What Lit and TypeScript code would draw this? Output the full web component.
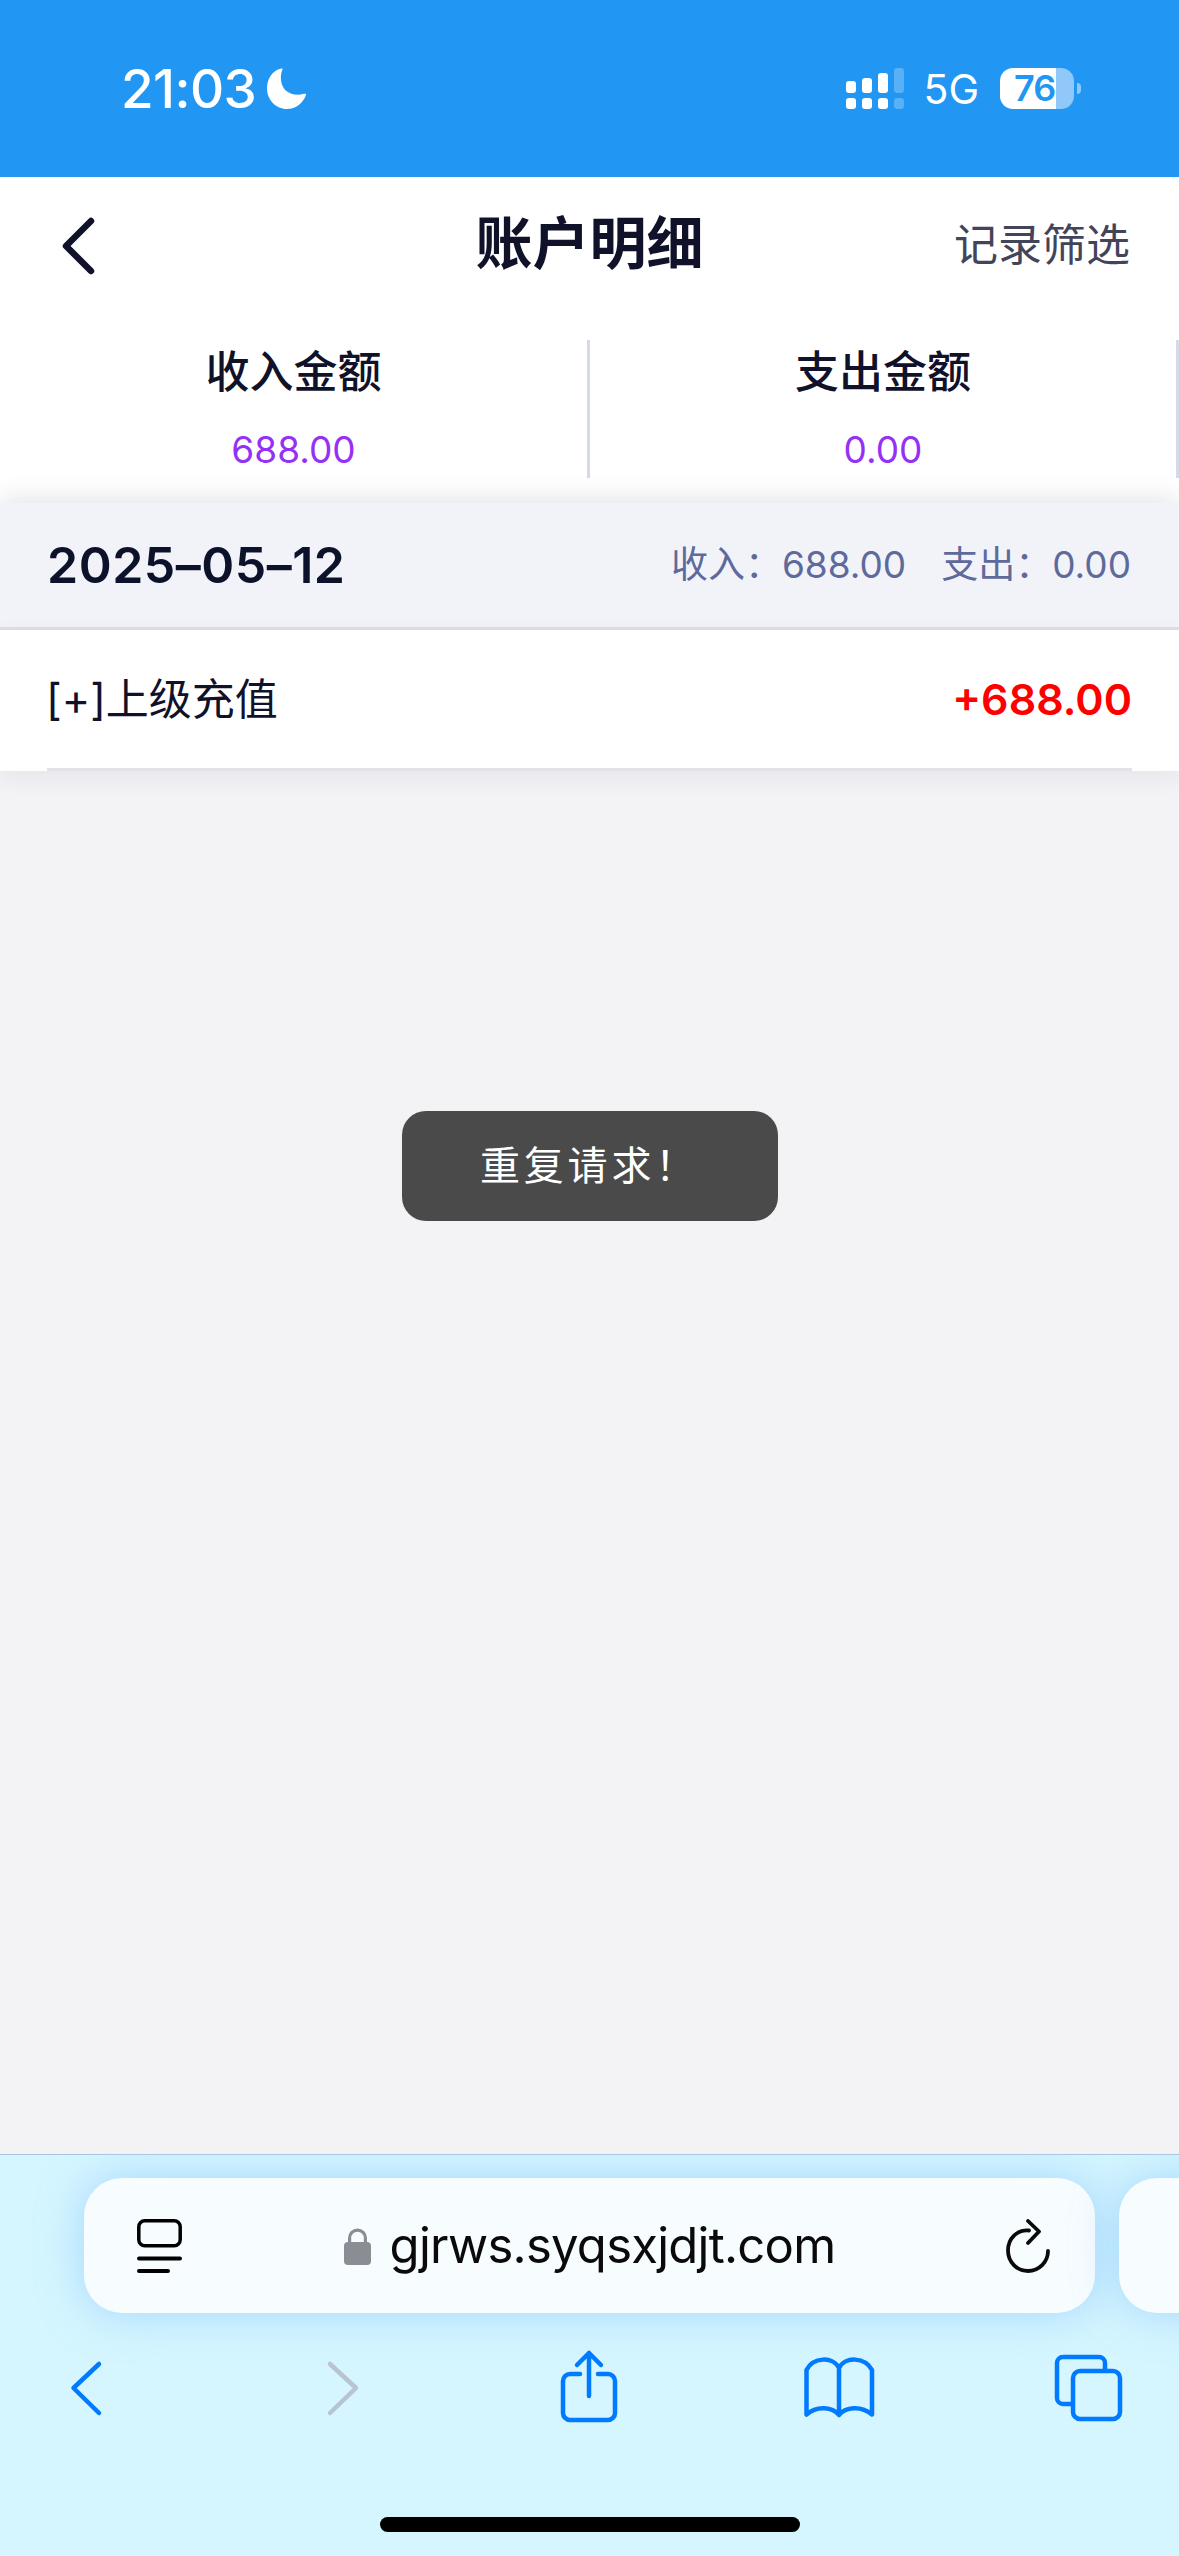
import { LitElement, html, css } from "lit";
import { customElement } from "lit/decorators.js";

@customElement("app-root")
export class AppRoot extends LitElement {
  static styles = css`
    :host { display: block; width: 1179px; height: 2556px; overflow: hidden; font-family: Inter, "Noto Sans CJK SC", sans-serif; color: #0f1229; background: #f3f3f6; }
    .shell { display: flex; flex-direction: column; height: 2556px; }
    .status { flex: 0 0 177px; background: #2196f3; color: #fff; display: flex; align-items: center; justify-content: space-between; padding: 0 98px 0 121px; box-sizing: border-box; }
    .st-left { display: flex; align-items: center; gap: 11px; }
    .time { font-size: 53px; font-weight: 500; line-height: 60px; letter-spacing: -0.6px; }
    .st-right { display: flex; align-items: center; }
    .net { font-size: 41px; line-height: 48px; margin: 0 21px 0 19px; }
    .battery { width: 74px; height: 41px; border-radius: 13px; background: linear-gradient(90deg, #fff 56px, #90c8fa 56px); color: #2196f3; font-size: 36px; font-weight: 600; line-height: 41px; padding-left: 14px; box-sizing: border-box; letter-spacing: -1px; }
    .nub { width: 4px; height: 11px; margin-left: 3px; background: #90c8fa; border-radius: 0 6px 6px 0; }

    .page { flex: 1; position: relative; display: flex; flex-direction: column; min-height: 0; }
    .nav { height: 132px; background: #fff; display: grid; grid-template-columns: 1fr auto 1fr; align-items: center; padding: 0 49px; }
    .back { display: block; margin: 6px 0 0 12px; }
    .title { font-size: 57px; font-weight: 700; line-height: 70px; margin-top: 2px; }
    .filter { justify-self: end; font-size: 44px; color: #42445a; line-height: 60px; margin-top: 4px; }
    .summary { background: #fff; display: flex; padding: 31px 0 25px; }
    .cell { flex: 0 0 590px; height: 138px; box-sizing: border-box; border-right: 3px solid #d5daea; display: flex; flex-direction: column; align-items: center; }
    .cell + .cell { flex-basis: 589px; }
    .cell-label { font-size: 44px; font-weight: 500; line-height: 64px; }
    .cell-value { margin-top: 18px; font-size: 37px; line-height: 56px; color: #9431f5; }
    .day { position: relative; height: 127px; box-sizing: border-box; background: #f2f3f9; border-bottom: 3px solid #e0e0e3; display: flex; align-items: center; justify-content: space-between; padding: 0 48px 0 47px; box-shadow: 0 -4px 24px rgba(40, 45, 90, 0.13); }
    .date { font-size: 50px; font-weight: 600; color: #0b1229; line-height: 60px; letter-spacing: 0.5px; }
    .day-totals { display: flex; gap: 35px; font-size: 37px; color: #5d6a9b; line-height: 50px; }
    .row { position: relative; background: #fff; padding: 0 47px; box-shadow: 0 6px 22px rgba(40, 45, 90, 0.07); }
    .row-inner { height: 141px; box-sizing: border-box; border-bottom: 3px solid #e3e3e6; display: flex; align-items: center; justify-content: space-between; }
    .row-name { font-size: 43px; line-height: 60px; margin-left: -1px; }
    .row-amount { font-size: 43px; font-weight: 600; color: #f00; line-height: 60px; }
    .toast { position: absolute; top: 934px; left: 402px; width: 376px; height: 110px; box-sizing: border-box; background: #4a4a4a; border-radius: 24px; color: #fff; font-size: 40px; font-weight: 400; letter-spacing: 3.8px; display: flex; align-items: center; padding: 0 0 6px 78px; white-space: nowrap; }

    .bar { flex: 0 0 402px; box-sizing: border-box; background: #d5f6ff; border-top: 1px solid #a9c6e0; overflow: hidden; display: flex; flex-direction: column; }
    .urls { display: flex; gap: 24px; margin-top: 23px; padding-left: 84px; }
    .url { flex: 0 0 1011px; height: 135px; box-sizing: border-box; background: #f7fcff; border-radius: 38px; box-shadow: 0 0 44px rgba(120, 185, 250, 0.5); display: grid; grid-template-columns: 1fr auto 1fr; align-items: center; padding: 0 45px; }
    .tab-ic { margin-left: 8px; display: block; }
    .addr { display: flex; align-items: center; gap: 19px; font-size: 49px; color: #0a0a0a; line-height: 60px; letter-spacing: -0.75px; }
    .rel { justify-self: end; display: block; }
    .tools { display: flex; gap: 170px; padding-left: 46px; margin-top: 33px; }
    .tools svg { display: block; flex: none; }
    .forward { margin-left: 1px; }
    .home { align-self: center; width: 420px; height: 15px; border-radius: 8px; background: #000; margin-top: 91px; }
  `;

  render() {
    return html`<div class="shell">
      <div class="status">
        <div class="st-left">
          <span class="time">21:03</span>
          <svg width="40" height="41" viewBox="0 0 40 41"><path fill="#fff" d="M14.5 .5C6 2 0 10 0 20.5 0 32 9 41 20 41c9 0 16-6 19-14 .3-1-.8-1.5-2-1.2C26 29 15 24 14 12c-.3-4 0-7 1.500-10.500.3-.7 0-1.100-1-1z"/></svg>
        </div>
        <div class="st-right">
          <svg width="58" height="41" viewBox="0 0 58 41" fill="#fff">
            <rect x="0" y="30" width="10" height="11" rx="3"/><rect x="16" y="30" width="10" height="11" rx="3"/><rect x="32" y="30" width="10" height="11" rx="3"/>
            <rect x="48" y="30" width="10" height="11" rx="3" opacity=".25"/>
            <rect x="0" y="13" width="10" height="12" rx="3"/><rect x="16" y="10" width="10" height="15" rx="3"/><rect x="32" y="5" width="10" height="20" rx="3"/>
            <rect x="48" y="0" width="10" height="25" rx="3" opacity=".25"/>
          </svg>
          <span class="net">5G</span>
          <div class="battery">76</div>
          <div class="nub"></div>
        </div>
      </div>

      <div class="page">
        <div class="nav">
          <svg class="back" width="36" height="60" viewBox="0 0 36 60"><path d="M30 5 5 30l25 25" fill="none" stroke="#0f1229" stroke-width="6.500" stroke-linecap="round" stroke-linejoin="round"/></svg>
          <div class="title">账户明细</div>
          <div class="filter">记录筛选</div>
        </div>
        <div class="summary">
          <div class="cell"><div class="cell-label">收入金额</div><div class="cell-value">688.00</div></div>
          <div class="cell"><div class="cell-label">支出金额</div><div class="cell-value">0.00</div></div>
        </div>
        <div class="day">
          <div class="date">2025–05–12</div>
          <div class="day-totals"><span>收入：688.00</span><span>支出：0.00</span></div>
        </div>
        <div class="row">
          <div class="row-inner"><span class="row-name">[+]上级充值</span><span class="row-amount">+688.00</span></div>
        </div>
        <div class="toast">重复请求！</div>
      </div>

      <div class="bar">
        <div class="urls">
          <div class="url">
            <svg class="tab-ic" width="45" height="54" viewBox="0 0 45 54" fill="none" stroke="#000" stroke-width="3.500" stroke-linecap="round"><rect x="1.800" y="1.800" width="41.400" height="25" rx="6"/><path d="M2 39.500h41M2 52h29" stroke-width="4"/></svg>
            <div class="addr">
              <svg width="27" height="38" viewBox="0 0 27 38" fill="#8a8d94"><path d="M4 17V11a9.500 9.500 0 0 1 19 0v6h-3.200V11a6.300 6.300 0 0 0-12.600 0v6z"/><rect x="0" y="15" width="27" height="23" rx="4"/></svg>
              <span>gjrws.syqsxjdjt.com</span>
            </div>
            <svg class="rel" width="44" height="54" viewBox="0 0 44 54" fill="none" stroke="#0a0a0a" stroke-width="3.800" stroke-linecap="round" stroke-linejoin="round"><path d="M23 11.500C11 10.500 2 19.500 2 31.500c0 11.500 9 20.500 20 20.500s20-9 20-20"/><path d="M22 2l11 10.500L22 24"/></svg>
          </div>
          <div class="url"></div>
        </div>
        <div class="tools">
          <svg width="80" height="80" viewBox="0 0 80 80" fill="none" stroke="#007aff" stroke-width="4.500" stroke-linecap="round" stroke-linejoin="round"><path d="M53 18 27.500 42 53 67" /></svg>
          <svg class="forward" width="80" height="80" viewBox="0 0 80 80" fill="none" stroke="#b8c4cf" stroke-width="4.500" stroke-linecap="round" stroke-linejoin="round"><path d="M33 18l26 24-26 25"/></svg>
          <svg width="80" height="80" viewBox="0 0 80 80" fill="none" stroke="#007aff" stroke-width="4.500" stroke-linecap="round" stroke-linejoin="round"><path d="M33 28H23a7 7 0 0 0-7 7v32a7 7 0 0 0 7 7h38a7 7 0 0 0 7-7V35a7 7 0 0 0-7-7H51"/><path d="M42 50V7M30 19 42 7l12 12"/></svg>
          <svg width="80" height="80" viewBox="0 0 80 80" fill="none" stroke="#007aff" stroke-width="4.500" stroke-linecap="round" stroke-linejoin="round"><path d="M42 22V69C36 61 20 59 9.500 68.500V24C16 11 36 10 42 22C48 10 68 11 75 24V68.500C64 59 48 61 42 69"/></svg>
          <svg width="80" height="80" viewBox="0 0 80 80" fill="none" stroke="#007aff" stroke-width="4.500" stroke-linecap="round" stroke-linejoin="round"><path d="M58 23v-6a6 6 0 0 0-6-6H16a6 6 0 0 0-6 6v35a6 6 0 0 0 6 6h8"/><rect x="26" y="25" width="47" height="48" rx="7"/></svg>
        </div>
        <div class="home"></div>
      </div>
    </div>`;
  }
}
